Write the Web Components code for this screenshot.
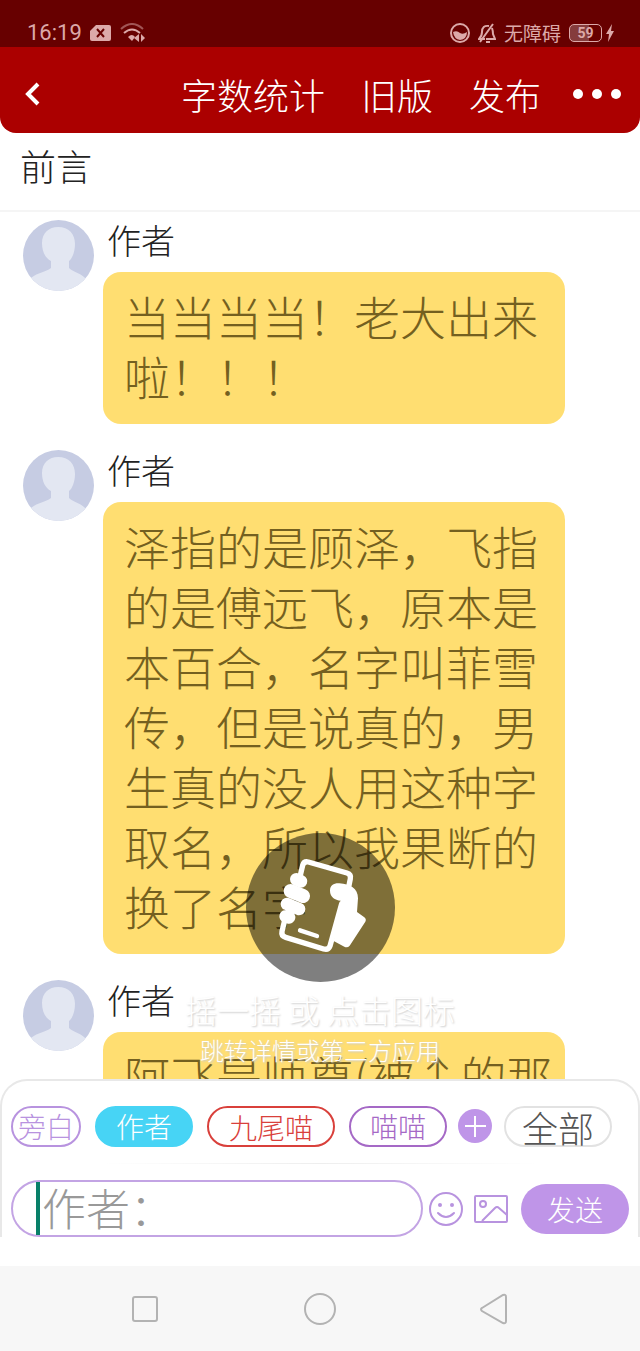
<!DOCTYPE html>
<html lang="zh-CN">
<head>
<meta charset="utf-8">
<meta name="viewport" content="width=device-width, initial-scale=1">
<title>前言</title>
<style>
    html, body {
        height: 100%;
        margin: 0;
    }
    body {
        display: flex;
        flex-direction: column;
        background: #fff;
        color: #222;
        font-family: "Noto Sans CJK SC", sans-serif;
        font-weight: 300;
    }
</style>
</head>
<body>
    <status-bar time="16:19" battery="59">无障碍</status-bar>
    <app-header>
        <a href="#count">字数统计</a>
        <a href="#old">旧版</a>
        <a href="#publish">发布</a>
    </app-header>
    <chapter-title>前言</chapter-title>
    <chat-view>
        <chat-message author="作者">当当当当！老大出来啦！！！</chat-message>
        <chat-message author="作者">泽指的是顾泽，飞指的是傅远飞，原本是本百合，名字叫菲雪传，但是说真的，男生真的没人用这种字取名，所以我果断的换了名字</chat-message>
        <chat-message author="作者">阿飞是师尊(被↑的那</chat-message>
        <shake-hint slot="overlay">
            摇一摇 或 点击图标
            <span slot="detail">跳转详情或第三方应用</span>
        </shake-hint>
    </chat-view>
    <message-composer placeholder="作者：">
        <role-chip class="narrow">旁白</role-chip>
        <role-chip class="active">作者</role-chip>
        <role-chip class="red">九尾喵</role-chip>
        <role-chip class="violet">喵喵</role-chip>
        <role-chip slot="all" class="all">全部</role-chip>
    </message-composer>
    <system-nav></system-nav>

<script>
class StatusBar extends HTMLElement {
    constructor() {
        super();
        this.attachShadow({ mode: "open" });

        this.shadowRoot.innerHTML = `
            <style>
                :host {
                    display: flex;
                    flex: none;
                    align-items: center;
                    justify-content: space-between;
                    box-sizing: border-box;
                    height: 47px;
                    padding: 18px 26px 0 27px;
                    background: #670000;
                    color: #dca9a9;
                    font-size: 19px;
                    font-weight: 400;
                    line-height: 28px;
                }
                div { display: flex; align-items: center; gap: 8px; }
                .time { font: 22px/28px Roboto, sans-serif; }
                .battery {
                    box-sizing: border-box;
                    width: 33px;
                    height: 18px;
                    border: 1px solid #dca9a9;
                    border-radius: 5px;
                    background: linear-gradient(90deg, #853c3c 60%, transparent 60%);
                    font: bold 14px/16px Roboto, sans-serif;
                    text-align: center;
                }
                .power { gap: 4px; }
                svg { display: block; }
            </style>
            <div>
                <span class="time">${this.getAttribute("time")}</span>
                <svg width="22" height="18" viewBox="0 0 22 18">
                    <path d="M6 1H19Q21 1 21 3V15Q21 17 19 17H2Q0 17 0 15V7Z" fill="#dca9a9"/>
                    <path d="M7 5L14 13M14 5L7 13" stroke="#670000" stroke-width="2"/>
                </svg>
                <svg width="26" height="20" viewBox="0 0 26 20" fill="none" stroke="#dca9a9" stroke-width="2">
                    <path d="M1 6Q12 -4 23 6" opacity=".5"/>
                    <path d="M4 10Q12 3 20 10"/>
                    <path d="M8 14Q12 10 15 14L12 18Z" fill="#dca9a9" stroke="none"/>
                    <path d="M19 11V19L14 15ZM21 11V19L25 15Z" fill="#dca9a9" stroke="none"/>
                </svg>
            </div>
            <div>
                <svg width="20" height="20" viewBox="0 0 20 20">
                    <circle cx="10" cy="10" r="9" fill="none" stroke="#dca9a9" stroke-width="2"/>
                    <path d="M3 9Q7 7 10 10Q13 12 17 9Q17 16 10 17Q4 16 3 9Z" fill="#dca9a9"/>
                </svg>
                <svg width="18" height="20" viewBox="0 0 18 20" fill="none" stroke="#dca9a9" stroke-width="2">
                    <path d="M11 3Q4 2 4 9Q4 13 1 16H7M14 5Q15 8 15 11L17 16H8M8 19H12M2 19L15 1"/>
                </svg>
                <slot></slot>
                <div class="power">
                    <span class="battery">${this.getAttribute("battery")}</span>
                    <svg width="8" height="18" viewBox="0 0 8 18">
                        <path d="M6 0L0 10H3L2 18L8 7H5Z" fill="#dca9a9"/>
                    </svg>
                </div>
            </div>
        `;
    }
}

class AppHeader extends HTMLElement {
    constructor() {
        super();
        this.attachShadow({ mode: "open" });

        this.shadowRoot.innerHTML = `
            <style>
                :host {
                    display: flex;
                    flex: none;
                    align-items: center;
                    box-sizing: border-box;
                    height: 86px;
                    padding: 8px 18px 0 20px;
                    border-radius: 0 0 16px 16px;
                    background: #ab0000;
                    color: #fff;
                }
                nav {
                    display: flex;
                    gap: 36px;
                    margin: 0 32px 0 auto;
                    font-size: 36px;
                    line-height: 52px;
                }
                ::slotted(a) { color: inherit; text-decoration: none; }
                button { padding: 0; border: 0; background: none; }
                svg { display: block; }
            </style>
            <button aria-label="返回">
                <svg width="26" height="26" viewBox="0 0 26 26">
                    <path d="M18 3L8 13L18 23" fill="none" stroke="#fff" stroke-width="4"/>
                </svg>
            </button>
            <nav><slot></slot></nav>
            <button aria-label="更多">
                <svg width="49" height="12" viewBox="0 0 49 12" fill="#fff">
                    <circle cx="5" cy="6" r="5"/><circle cx="24" cy="6" r="5"/><circle cx="43" cy="6" r="5"/>
                </svg>
            </button>
        `;
    }
}

class ChapterTitle extends HTMLElement {
    constructor() {
        super();
        this.attachShadow({ mode: "open" });

        this.shadowRoot.innerHTML = `
            <style>
                :host {
                    display: block;
                    flex: none;
                    padding: 6px 20px 19px;
                    border-bottom: 2px solid #f5f5f5;
                }
                h1 { margin: 0; font-size: 36px; font-weight: inherit; line-height: 52px; }
            </style>
            <h1><slot></slot></h1>
        `;
    }
}

class ChatView extends HTMLElement {
    constructor() {
        super();
        this.attachShadow({ mode: "open" });

        this.shadowRoot.innerHTML = `
            <style>
                :host {
                    display: block;
                    position: relative;
                    flex: 1;
                    min-height: 0;
                }
                .list {
                    display: flex;
                    flex-direction: column;
                    gap: 26px;
                    box-sizing: border-box;
                    height: 100%;
                    padding: 8px 75px 0 23px;
                    overflow-y: auto;
                    scrollbar-width: none;
                }
            </style>
            <div class="list"><slot></slot></div>
            <slot name="overlay"></slot>
        `;
    }
}

class ChatMessage extends HTMLElement {
    constructor() {
        super();
        this.attachShadow({ mode: "open" });

        this.shadowRoot.innerHTML = `
            <style>
                :host { display: flex; flex: none; align-items: flex-start; gap: 9px; }
                svg { flex: none; display: block; border-radius: 50%; }
                .body { flex: 1; min-width: 0; }
                .name { padding-left: 4px; font-size: 34px; line-height: 40px; margin-bottom: 12px; }
                p {
                    margin: 0;
                    padding: 13px 10px 19px 21px;
                    border-radius: 18px;
                    background: #ffde71;
                    color: #746020;
                    font-size: 46px;
                    line-height: 60px;
                }
            </style>
            <svg width="71" height="71" viewBox="0 0 71 71">
                <rect width="71" height="71" fill="#c6cce3"/>
                <path d="M35 7C46 7 52 14 52 24C52 32 49 39 46 41V48C50 52 60 54 64 60V71H6V60C10 54 23 52 28 48V41C22 38 19 31 19 23C19 13 26 7 35 7Z" fill="#e3e7f2"/>
            </svg>
            <div class="body">
                <div class="name">${this.getAttribute("author")}</div>
                <p><slot></slot></p>
            </div>
        `;
    }
}

class ShakeHint extends HTMLElement {
    constructor() {
        super();
        this.attachShadow({ mode: "open" });

        this.shadowRoot.innerHTML = `
            <style>
                :host {
                    display: flex;
                    flex-direction: column;
                    align-items: center;
                    position: absolute;
                    inset: auto 0 9px 0;
                    color: #fff;
                    text-shadow: 1px 1px 2px #ccc;
                    pointer-events: none;
                }
                button {
                    margin: 0 0 6px;
                    padding: 0;
                    border: 0;
                    border-radius: 50%;
                    background: rgba(0, 0, 0, .5);
                    pointer-events: auto;
                }
                svg { display: block; }
                .title { font-size: 32px; line-height: 42px; }
                .detail { font-size: 24px; line-height: 40px; }
            </style>
            <button aria-label="摇一摇">
                <svg width="149" height="149" viewBox="48 38 447 447" fill="none" stroke="#fff" stroke-linecap="round" stroke-linejoin="round">
                    <!-- phone -->
                    <path stroke-width="16" d="M211 165L218 135Q222 122 235 125L351 158Q364 162 361 175L355 205M164 300L156 333Q153 347 167 351L281 386Q295 390 300 377L335 250"/>
                    <path stroke-width="13" d="M210 330L261 347"/>
                    <!-- fingers -->
                    <path stroke-width="38" d="M199 177L213 183M171 251L207 266M167 288L177 291"/>
                    <path stroke-width="42" d="M182 212L219 227"/>
                    <!-- thumb and wrist -->
                    <path fill="#fff" stroke="none" d="M300 211C300 194 312 188 328 189C360 191 384 204 384 234L381 275L403 291Q410 297 406 304L359 376Q352 384 343 379L311 362L332 241C315 239 300 230 300 211Z"/>
                </svg>
            </button>
            <div class="title"><slot></slot></div>
            <div class="detail"><slot name="detail"></slot></div>
        `;
    }
}

class RoleChip extends HTMLElement {
    constructor() {
        super();
        this.attachShadow({ mode: "open" });

        this.shadowRoot.innerHTML = `
            <style>
                :host { display: block; flex: none; --chip: #b893df; --pad: 19px; }
                :host(.narrow) { --pad: 5px; }
                :host(.active) button { background: #47d4f5; border-color: #47d4f5; color: #fff; }
                :host(.red) { --chip: #d9403b; }
                :host(.violet) { --chip: #a569c6; }
                :host(.red) button { padding: 0 20px; }
                :host(.all) button { border-color: #e2e2e2; color: #555; padding: 0 16px; font-size: 36px; }
                button {
                    display: block;
                    height: 41px;
                    padding: 0 var(--pad) 2px;
                    border: 2px solid var(--chip);
                    border-radius: 21px;
                    background: #fff;
                    color: var(--chip);
                    font: inherit;
                    font-size: 28px;
                    line-height: 34px;
                    white-space: nowrap;
                }
            </style>
            <button><slot></slot></button>
        `;
    }
}

class MessageComposer extends HTMLElement {
    constructor() {
        super();
        this.attachShadow({ mode: "open" });

        this.shadowRoot.innerHTML = `
            <style>
                :host {
                    display: block;
                    flex: none;
                    margin-bottom: 29px;
                    padding: 25px 9px 0;
                    border: 2px solid #e8e8e8;
                    border-bottom: 0;
                    border-radius: 27px 27px 0 0;
                    background: #fff;
                }
                .roles { display: flex; align-items: center; gap: 11px; }
                .names { display: flex; gap: 14px; }
                hr {
                    height: 1px;
                    margin: 16px 90px;
                    border: 0;
                    background: linear-gradient(90deg, #fff, #eee, #fff);
                }
                .entry { display: flex; align-items: center; }
                .field {
                    display: flex;
                    flex: 1;
                    min-width: 0;
                    box-sizing: border-box;
                    height: 57px;
                    margin-right: 6px;
                    padding-left: 23px;
                    border: 2px solid #c3a4e4;
                    border-radius: 29px;
                }
                .caret { flex: none; width: 4px; background: #088069; }
                input {
                    flex: 1;
                    min-width: 0;
                    margin: 0 24px 0 0;
                    padding: 0 0 4px 2px;
                    border: 0;
                    outline: 0;
                    background: none;
                    color: #333;
                    font: inherit;
                    font-size: 44px;
                    line-height: 48px;
                }
                input::placeholder { color: #999; }
                button { flex: none; padding: 0; border: 0; background: none; font: inherit; }
                svg { display: block; }
                .picture { margin: 0 12px 0 10px; }
                .send {
                    width: 108px;
                    height: 50px;
                    border-radius: 25px;
                    background: #bf95e8;
                    color: #fff;
                    font-size: 28px;
                    line-height: 48px;
                }
            </style>
            <div class="roles">
                <div class="names"><slot></slot></div>
                <button aria-label="添加角色">
                    <svg width="35" height="35" viewBox="0 0 35 35">
                        <circle cx="17" cy="17" r="17" fill="#bf95e8"/>
                        <path d="M17 7V28M7 17H28" stroke="#fff" stroke-width="2"/>
                    </svg>
                </button>
                <slot name="all"></slot>
            </div>
            <hr>
            <div class="entry">
                <div class="field">
                    <span class="caret"></span>
                    <input type="text" aria-label="消息" placeholder="${this.getAttribute("placeholder")}">
                </div>
                <button aria-label="表情">
                    <svg width="34" height="34" viewBox="0 0 34 34" fill="none" stroke="#b893df" stroke-width="2">
                        <circle cx="17" cy="17" r="16"/>
                        <path d="M9 21Q17 29 25 21" stroke-linecap="round"/>
                        <circle cx="11" cy="13" r="2" fill="#b893df" stroke="none"/>
                        <circle cx="23" cy="13" r="2" fill="#b893df" stroke="none"/>
                    </svg>
                </button>
                <button class="picture" aria-label="图片">
                    <svg width="36" height="28" viewBox="0 0 36 28" fill="none" stroke="#b893df" stroke-width="2">
                        <rect x="2" y="1" width="32" height="26" rx="1"/>
                        <circle cx="10" cy="9" r="3"/>
                        <path d="M9 26L22 13Q24 11 26 13L34 20"/>
                    </svg>
                </button>
                <button class="send">发送</button>
            </div>
        `;
    }
}

class SystemNav extends HTMLElement {
    constructor() {
        super();
        this.attachShadow({ mode: "open" });

        this.shadowRoot.innerHTML = `
            <style>
                :host {
                    display: flex;
                    flex: none;
                    align-items: center;
                    justify-content: center;
                    gap: 22%;
                    height: 85px;
                    background: #f7f7f7;
                }
                button { padding: 0; border: 0; background: none; }
                svg { display: block; fill: none; stroke: #b3b3b3; stroke-width: 2; }
            </style>
            <button aria-label="最近任务">
                <svg width="34" height="34" viewBox="0 0 34 34"><rect x="5" y="5" width="24" height="24" rx="2"/></svg>
            </button>
            <button aria-label="主屏幕">
                <svg width="34" height="34" viewBox="0 0 34 34"><circle cx="17" cy="17" r="15"/></svg>
            </button>
            <button aria-label="返回">
                <svg width="34" height="34" viewBox="0 0 34 34">
                    <path d="M4 16L25 3Q28 2 28 5V29Q28 32 25 31L4 19Q2 17 4 16Z"/>
                </svg>
            </button>
        `;
    }
}

// Register the components
customElements.define("status-bar", StatusBar);
customElements.define("app-header", AppHeader);
customElements.define("chapter-title", ChapterTitle);
customElements.define("chat-view", ChatView);
customElements.define("chat-message", ChatMessage);
customElements.define("shake-hint", ShakeHint);
customElements.define("role-chip", RoleChip);
customElements.define("message-composer", MessageComposer);
customElements.define("system-nav", SystemNav);
</script>
</body>
</html>
